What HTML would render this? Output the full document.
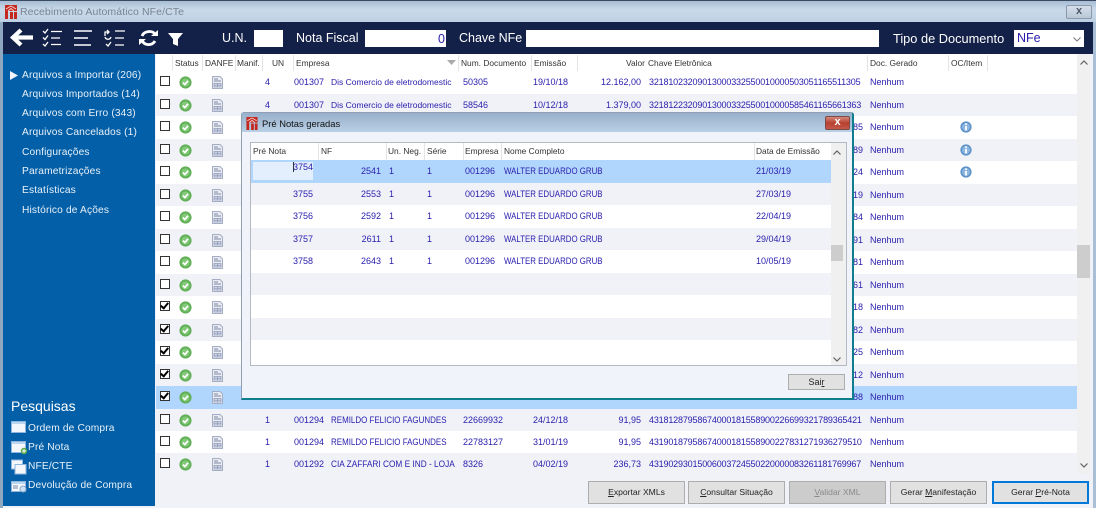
<!DOCTYPE html>
<html><head><meta charset="utf-8">
<style>
html,body{margin:0;padding:0;width:1096px;height:508px;overflow:hidden;background:#a9bfd6}
body{position:relative;font-family:"Liberation Sans",sans-serif;font-size:9px;filter:blur(.3px)}
div,span{position:absolute;white-space:nowrap;box-sizing:border-box}
svg{position:absolute;overflow:visible}
#title{left:0;top:0;width:1096px;height:22px;background:linear-gradient(#a7bdd4,#c9d9e8 40%,#bcd0e3);border-top:1px solid #3a4a60}
.tb{color:#fff;font-size:12.5px;top:31px}
.in{background:#fff;top:30px;height:17px}
.side{color:#e8f0f8;font-size:10.2px;left:22px;letter-spacing:.15px}
.r{left:156px;width:921px;height:22.5px;background:#fff;color:#2b20ad}
.r.a{background:#f1f2f8}
.r.s{background:#b1d6fd}
.r span{top:6px}
.cb{left:4px;top:5px!important;width:10px;height:10px;border:1.3px solid #333;background:#fff}
.cb.c::after{content:"";position:absolute;left:1px;top:-1px;width:3px;height:6px;border:solid #000;border-width:0 2px 2px 0;transform:rotate(40deg)}
.u{left:109px}.e{left:138px}.n{left:175px;font-size:8.5px}.nu{font-size:9px;transform:scaleX(.885);transform-origin:0 0}.d{left:307px}.m{left:377px}
.v{left:405px;width:80px;text-align:right}
.k{left:493px;letter-spacing:-.17px}
.g{left:714px}
.h{top:58px;color:#333;font-size:8.4px}
.sep{top:55px;width:1px;height:17px;background:#e4e4e4}
.dr{left:251px;width:580px;height:22.5px;background:#fff;color:#2b20ad}
.dr.a{background:#f1f2f8}
.dr.s{background:#b1d6fd}
.dr span{top:6px}
.p{left:0;width:62px;text-align:right}
.f{left:67px;width:63px;text-align:right}
.un{left:138px}.se{left:176px}.em{left:214px}.no{left:253px;transform:scaleX(.876);transform-origin:0 0}.da{left:505px}
.dh{top:146px;color:#333;font-size:8.4px}
.btn{top:481px;height:23px;width:97px;background:#e1e1e1;border:1px solid #adadad;color:#222;font-size:8.6px;text-align:center;line-height:21px}
u{text-decoration:underline}
</style></head><body>
<svg width="0" height="0" style="position:absolute"><defs>
<symbol id="ok" viewBox="0 0 12 12"><circle cx="6" cy="6" r="5.6" fill="#62b058"/><circle cx="6" cy="6" r="3.7" fill="#83c979"/><path d="M3.6 6.1 5.4 7.8 8.4 4.4" fill="none" stroke="#fff" stroke-width="1.6"/></symbol>
<symbol id="doc" viewBox="0 0 11 13"><path d="M.5.5H8L10.5 3V12.5H.5Z" fill="#e9ecf3" stroke="#a5adc4"/><path d="M2 3H6M2 5H9" stroke="#7f88a5"/><path d="M2 7.5H9V11H2ZM2 9.2H9M5.5 7.5V11" fill="#dfe4f0" stroke="#8f99b8" stroke-width=".8"/></symbol>
<symbol id="info" viewBox="0 0 12 12"><circle cx="6" cy="6" r="5.6" fill="#5d92c9"/><circle cx="6" cy="6" r="4" fill="#8db6df"/><path d="M6 2.4V4M6 5V9.5" stroke="#fff" stroke-width="1.8"/></symbol>
<symbol id="logo" viewBox="0 0 12 14"><path d="M0 0H12V6H0ZM0 6H3V14H0ZM5 7H8V14H5ZM9 7H12V14H9Z" fill="#c5281f"/><path d="M1 4 6 1 11 4M3 6 6 3.5 9 6" fill="none" stroke="#f6d9d5" stroke-width=".9"/></symbol>
</defs></svg>

<div id="title"></div>
<svg style="left:5px;top:5px" width="12" height="14"><use href="#logo"/></svg>
<div style="left:20px;top:6px;color:#7a8492;font-size:10.5px;letter-spacing:.1px">Recebimento Automático NFe/CTe</div>
<div style="left:1066px;top:5px;width:26px;height:14px;border:1px solid #8a9aac;background:linear-gradient(#d5dfea,#b9c7d6);border-radius:2px;color:#4f5a68;font-size:11px;line-height:11px;text-align:center;font-weight:bold">x</div>
<div style="left:0;top:22px;width:3px;height:486px;background:#8fa7c0"></div>
<div style="left:1093px;top:22px;width:3px;height:486px;background:#a9bfd6"></div>
<div style="left:3px;top:22px;width:1090px;height:486px;background:#f0f2f8"></div>
<div style="left:3px;top:22px;width:1090px;height:32px;background:#132048"></div>

<svg style="left:10px;top:28px" width="180" height="20" fill="none" stroke="#fff">
<path d="M11 2 3 9.5 11 17M5 9.5H23" stroke-width="4.2"/>
<g stroke-width="1.3"><path d="M33 3 35 5 38 1M33 9.5 35 11.5 38 7.5M33 16 35 18 38 14"/><path d="M41 3.5H52M41 10H50M41 16.5H51"/></g>
<path d="M64 3H82M64 10H78M64 17H81" stroke-width="1.5"/>
<g stroke-width="1.3"><path d="M105 3H115M105 10H114M105 17H114M95 8V4H99M97 2 99 4 97 6M101 9C100 12 96 12 95 9M96 16 98 18 101 14"/></g>
<path d="M145 6C142 2 134 3 132 8M132 12C134 18 142 18 145 13" stroke-width="2.8"/><path d="M141 8H148V2ZM136 11H129V17Z" fill="#fff" stroke="none"/>
<path d="M158 5H173L168 11V18L163 16V11Z" fill="#fff" stroke="none"/>
</svg>
<div class="tb" style="left:222px">U.N.</div>
<div class="in" style="left:254px;width:29px"></div>
<div class="tb" style="left:296px">Nota Fiscal</div>
<div class="in" style="left:365px;width:81px;color:#2b20ad;font-size:12.5px;text-align:right;padding:2px 1px 0 0">0</div>
<div class="tb" style="left:459px">Chave NFe</div>
<div class="in" style="left:526px;width:353px"></div>
<div class="tb" style="left:893px;font-size:12.8px">Tipo de Documento</div>
<div class="in" style="left:1014px;top:30px;width:70px;color:#2b20ad;font-size:12.5px;padding:0 0 0 3px;line-height:17px">NFe</div>
<svg style="left:1073px;top:37px" width="8" height="5"><path d="M.5.5 4 4 7.5.5" fill="none" stroke="#777"/></svg>

<div style="left:3px;top:54px;width:152px;height:452px;background:#0360a8"></div>
<svg style="left:10px;top:71px" width="8" height="9"><path d="M0 0 8 4.5 0 9Z" fill="#f2f6fb"/></svg>
<div class="side" style="top:69.5px">Arquivos a Importar (206)</div>
<div class="side" style="top:88.5px">Arquivos Importados (14)</div>
<div class="side" style="top:107.5px">Arquivos com Erro (343)</div>
<div class="side" style="top:127px">Arquivos Cancelados (1)</div>
<div class="side" style="top:146.5px">Configurações</div>
<div class="side" style="top:165.5px">Parametrizações</div>
<div class="side" style="top:184.5px">Estatísticas</div>
<div class="side" style="top:204.5px">Histórico de Ações</div>
<div style="left:11px;top:398px;color:#fff;font-size:14px">Pesquisas</div>
<div class="side" style="left:28px;top:422.5px">Ordem de Compra</div>
<div class="side" style="left:28px;top:441.5px">Pré Nota</div>
<div class="side" style="left:28px;top:460.5px">NFE/CTE</div>
<div class="side" style="left:28px;top:479.5px">Devolução de Compra</div>
<svg style="left:11px;top:421px" width="17" height="72">
<g fill="#f4f8fd" stroke="#8fb6dc"><rect x=".5" y=".5" width="14" height="11"/><rect x=".5" y="20.5" width="14" height="11"/><rect x=".5" y="39" width="11" height="9"/><rect x="4" y="43.5" width="11" height="9.5"/><rect x=".5" y="60.5" width="14" height="10"/></g>
<path d="M1 1H14V3H1ZM1 21H14V23H1ZM1 61H14V63H1Z" fill="#bcd6ef"/>
<circle cx="13" cy="30" r="3.2" fill="#5cab4a"/><path d="M11 30H15M13 28V32" stroke="#fff"/>
<path d="M2 65H7M2 67H7" stroke="#7c8aa5"/><circle cx="12" cy="68" r="3" fill="#cfe3f6" stroke="#8aa8c8"/>
</svg>

<!-- main header -->
<div style="left:156px;top:54px;width:934px;height:420px;background:#fff;border-bottom:1px solid #bbb"></div>
<div class="sep" style="left:172px"></div><div class="sep" style="left:202px"></div><div class="sep" style="left:235px"></div><div class="sep" style="left:262px"></div><div class="sep" style="left:293px"></div><div class="sep" style="left:458px"></div><div class="sep" style="left:531px"></div><div class="sep" style="left:577px"></div><div class="sep" style="left:867px"></div><div class="sep" style="left:948px"></div><div class="sep" style="left:987px"></div>
<div class="h" style="left:175px">Status</div><div class="h" style="left:205px">DANFE</div><div class="h" style="left:237px">Manif.</div><div class="h" style="left:272px">UN</div><div class="h" style="left:296px">Empresa</div>
<svg style="left:447px;top:60px" width="9" height="5"><path d="M0 0H9L4.5 5Z" fill="#aaa"/></svg>
<div class="h" style="left:461px">Num. Documento</div><div class="h" style="left:534px">Emissão</div><div class="h" style="left:626px">Valor</div><div class="h" style="left:648px">Chave Eletrônica</div><div class="h" style="left:870px">Doc. Gerado</div><div class="h" style="left:951px">OC/Item</div>

<!-- rows -->
<div class="r" style="top:71px"><span class="cb"></span><svg style="left:23px;top:5px" width="13" height="13"><use href="#ok"/></svg><svg style="left:56px;top:5px" width="11" height="13"><use href="#doc"/></svg><span class="u">4</span><span class="e">001307</span><span class="n">Dis Comercio de eletrodomestic</span><span class="d">50305</span><span class="m">19/10/18</span><span class="v">12.162,00</span><span class="k">32181023209013000332550010000503051165511305</span><span class="g">Nenhum</span></div>
<div class="r a" style="top:93.5px"><span class="cb"></span><svg style="left:23px;top:5px" width="13" height="13"><use href="#ok"/></svg><svg style="left:56px;top:5px" width="11" height="13"><use href="#doc"/></svg><span class="u">4</span><span class="e">001307</span><span class="n">Dis Comercio de eletrodomestic</span><span class="d">58546</span><span class="m">10/12/18</span><span class="v">1.379,00</span><span class="k">32181223209013000332550010000585461165661363</span><span class="g">Nenhum</span></div>
<div class="r" style="top:116px"><span class="cb"></span><svg style="left:23px;top:5px" width="13" height="13"><use href="#ok"/></svg><svg style="left:56px;top:5px" width="11" height="13"><use href="#doc"/></svg><span style="left:697px">85</span><span class="g">Nenhum</span><svg style="left:804px;top:5px" width="12" height="12"><use href="#info"/></svg></div>
<div class="r a" style="top:138.5px"><span class="cb"></span><svg style="left:23px;top:5px" width="13" height="13"><use href="#ok"/></svg><svg style="left:56px;top:5px" width="11" height="13"><use href="#doc"/></svg><span style="left:697px">89</span><span class="g">Nenhum</span><svg style="left:804px;top:5px" width="12" height="12"><use href="#info"/></svg></div>
<div class="r" style="top:161px"><span class="cb"></span><svg style="left:23px;top:5px" width="13" height="13"><use href="#ok"/></svg><svg style="left:56px;top:5px" width="11" height="13"><use href="#doc"/></svg><span style="left:697px">24</span><span class="g">Nenhum</span><svg style="left:804px;top:5px" width="12" height="12"><use href="#info"/></svg></div>
<div class="r a" style="top:183.5px"><span class="cb"></span><svg style="left:23px;top:5px" width="13" height="13"><use href="#ok"/></svg><svg style="left:56px;top:5px" width="11" height="13"><use href="#doc"/></svg><span style="left:697px">19</span><span class="g">Nenhum</span></div>
<div class="r" style="top:206px"><span class="cb"></span><svg style="left:23px;top:5px" width="13" height="13"><use href="#ok"/></svg><svg style="left:56px;top:5px" width="11" height="13"><use href="#doc"/></svg><span style="left:697px">84</span><span class="g">Nenhum</span></div>
<div class="r a" style="top:228.5px"><span class="cb"></span><svg style="left:23px;top:5px" width="13" height="13"><use href="#ok"/></svg><svg style="left:56px;top:5px" width="11" height="13"><use href="#doc"/></svg><span style="left:697px">91</span><span class="g">Nenhum</span></div>
<div class="r" style="top:251px"><span class="cb"></span><svg style="left:23px;top:5px" width="13" height="13"><use href="#ok"/></svg><svg style="left:56px;top:5px" width="11" height="13"><use href="#doc"/></svg><span style="left:697px">81</span><span class="g">Nenhum</span></div>
<div class="r a" style="top:273.5px"><span class="cb"></span><svg style="left:23px;top:5px" width="13" height="13"><use href="#ok"/></svg><svg style="left:56px;top:5px" width="11" height="13"><use href="#doc"/></svg><span style="left:697px">61</span><span class="g">Nenhum</span></div>
<div class="r" style="top:296px"><span class="cb c"></span><svg style="left:23px;top:5px" width="13" height="13"><use href="#ok"/></svg><svg style="left:56px;top:5px" width="11" height="13"><use href="#doc"/></svg><span style="left:697px">18</span><span class="g">Nenhum</span></div>
<div class="r a" style="top:318.5px"><span class="cb c"></span><svg style="left:23px;top:5px" width="13" height="13"><use href="#ok"/></svg><svg style="left:56px;top:5px" width="11" height="13"><use href="#doc"/></svg><span style="left:697px">82</span><span class="g">Nenhum</span></div>
<div class="r" style="top:341px"><span class="cb c"></span><svg style="left:23px;top:5px" width="13" height="13"><use href="#ok"/></svg><svg style="left:56px;top:5px" width="11" height="13"><use href="#doc"/></svg><span style="left:697px">25</span><span class="g">Nenhum</span></div>
<div class="r a" style="top:363.5px"><span class="cb c"></span><svg style="left:23px;top:5px" width="13" height="13"><use href="#ok"/></svg><svg style="left:56px;top:5px" width="11" height="13"><use href="#doc"/></svg><span style="left:697px">12</span><span class="g">Nenhum</span></div>
<div class="r s" style="top:386px"><span class="cb c"></span><svg style="left:23px;top:5px" width="13" height="13"><use href="#ok"/></svg><svg style="left:56px;top:5px" width="11" height="13"><use href="#doc"/></svg><span style="left:697px">88</span><span class="g">Nenhum</span></div>
<div class="r a" style="top:408.5px"><span class="cb"></span><svg style="left:23px;top:5px" width="13" height="13"><use href="#ok"/></svg><svg style="left:56px;top:5px" width="11" height="13"><use href="#doc"/></svg><span class="u">1</span><span class="e">001294</span><span class="n nu">REMILDO FELICIO FAGUNDES</span><span class="d">22669932</span><span class="m">24/12/18</span><span class="v">91,95</span><span class="k">43181287958674000181558900226699321789365421</span><span class="g">Nenhum</span></div>
<div class="r" style="top:431px"><span class="cb"></span><svg style="left:23px;top:5px" width="13" height="13"><use href="#ok"/></svg><svg style="left:56px;top:5px" width="11" height="13"><use href="#doc"/></svg><span class="u">1</span><span class="e">001294</span><span class="n nu">REMILDO FELICIO FAGUNDES</span><span class="d">22783127</span><span class="m">31/01/19</span><span class="v">91,95</span><span class="k">43190187958674000181558900227831271936279510</span><span class="g">Nenhum</span></div>
<div class="r a" style="top:453px;height:20.5px"><span class="cb"></span><svg style="left:23px;top:5px" width="13" height="13"><use href="#ok"/></svg><svg style="left:56px;top:5px" width="11" height="13"><use href="#doc"/></svg><span class="u">1</span><span class="e">001292</span><span class="n nu" style="transform:scaleX(.92)">CIA ZAFFARI COM E IND - LOJA</span><span class="d">8326</span><span class="m">04/02/19</span><span class="v">236,73</span><span class="k">43190293015006003724550220000083261181769967</span><span class="g">Nenhum</span></div>

<!-- main scrollbar -->
<div style="left:1077px;top:54px;width:13px;height:420px;background:#f0f0f0"></div>
<div style="left:1077px;top:245px;width:13px;height:33px;background:#cdcdcd"></div>
<svg style="left:1080px;top:60px" width="8" height="5"><path d="M.5 4.5 4 1 7.5 4.5" fill="none" stroke="#606060" stroke-width="1.2"/></svg>
<svg style="left:1080px;top:463px" width="8" height="5"><path d="M.5.5 4 4 7.5.5" fill="none" stroke="#606060" stroke-width="1.2"/></svg>

<!-- buttons -->
<div class="btn" style="left:588px"><u>E</u>xportar XMLs</div>
<div class="btn" style="left:688px"><u>C</u>onsultar Situação</div>
<div class="btn" style="left:789px;background:#ccc;color:#8a8a8a"><u>V</u>alidar XML</div>
<div class="btn" style="left:890px">Gerar <u>M</u>anifestação</div>
<div class="btn" style="left:992px;border:2px solid #0078d7;line-height:19px">Gerar <u>P</u>ré-Nota</div>

<!-- dialog -->
<div style="left:241px;top:112px;width:613px;height:288px;background:#f0f4fa;border:1px solid #8fa0b4;border-right:2px solid #0f7f8f;border-bottom:2px solid #0f7f8f;border-radius:3px 3px 0 0"></div>
<div style="left:242px;top:113px;width:610px;height:19px;background:linear-gradient(#98b0ca,#b9d0e6)"></div>
<svg style="left:246px;top:117px" width="12" height="13"><use href="#logo"/></svg>
<div style="left:262px;top:118px;color:#111;font-size:9.4px">Pré Notas geradas</div>
<div style="left:825px;top:116px;width:25px;height:14px;background:linear-gradient(#d5897c,#b8402f 50%,#c2584a);border:1px solid #7d4a45;border-radius:2px;color:#fff;font-size:11px;line-height:11px;text-align:center;font-weight:bold">x</div>
<div style="left:250px;top:142px;width:597px;height:224px;background:#fff;border:1px solid #b5b9c2"></div>
<div class="dh" style="left:253px">Pré Nota</div><div class="dh" style="left:321px">NF</div><div class="dh" style="left:388px">Un. Neg.</div><div class="dh" style="left:427px">Série</div><div class="dh" style="left:465px">Empresa</div><div class="dh" style="left:504px">Nome Completo</div><div class="dh" style="left:756px">Data de Emissão</div>
<div class="sep" style="left:318px;top:143px"></div><div class="sep" style="left:386px;top:143px"></div><div class="sep" style="left:424px;top:143px"></div><div class="sep" style="left:463px;top:143px"></div><div class="sep" style="left:501px;top:143px"></div><div class="sep" style="left:754px;top:143px"></div>

<div class="dr s" style="top:160px"><span style="left:2px;top:2px;width:60px;height:18px;background:#e3effd"></span><span style="left:42px;top:2px;width:1px;height:10px;background:#333"></span><span class="p" style="top:2px">3754</span><span class="f">2541</span><span class="un">1</span><span class="se">1</span><span class="em">001296</span><span class="no">WALTER EDUARDO GRUB</span><span class="da">21/03/19</span></div>
<div class="dr a" style="top:182.5px"><span class="p">3755</span><span class="f">2553</span><span class="un">1</span><span class="se">1</span><span class="em">001296</span><span class="no">WALTER EDUARDO GRUB</span><span class="da">27/03/19</span></div>
<div class="dr" style="top:205px"><span class="p">3756</span><span class="f">2592</span><span class="un">1</span><span class="se">1</span><span class="em">001296</span><span class="no">WALTER EDUARDO GRUB</span><span class="da">22/04/19</span></div>
<div class="dr a" style="top:227.5px"><span class="p">3757</span><span class="f">2611</span><span class="un">1</span><span class="se">1</span><span class="em">001296</span><span class="no">WALTER EDUARDO GRUB</span><span class="da">29/04/19</span></div>
<div class="dr" style="top:250px"><span class="p">3758</span><span class="f">2643</span><span class="un">1</span><span class="se">1</span><span class="em">001296</span><span class="no">WALTER EDUARDO GRUB</span><span class="da">10/05/19</span></div>
<div class="dr a" style="top:272.5px"></div>
<div class="dr" style="top:295px"></div>
<div class="dr a" style="top:317.5px"></div>
<div class="dr" style="top:340px;height:22px"></div>
<div style="left:831px;top:143px;width:15px;height:222px;background:#f0f0f0"></div>
<div style="left:831px;top:245px;width:12px;height:16px;background:#cdcdcd"></div>
<svg style="left:833px;top:150px" width="8" height="5"><path d="M.5 4.5 4 1 7.5 4.5" fill="none" stroke="#606060" stroke-width="1.2"/></svg>
<svg style="left:833px;top:357px" width="8" height="5"><path d="M.5.5 4 4 7.5.5" fill="none" stroke="#606060" stroke-width="1.2"/></svg>
<div class="btn" style="left:788px;top:374px;width:57px;height:16px;line-height:14px;font-size:9px;background:#e1e1e1">Sai<u>r</u></div>
</body></html>
